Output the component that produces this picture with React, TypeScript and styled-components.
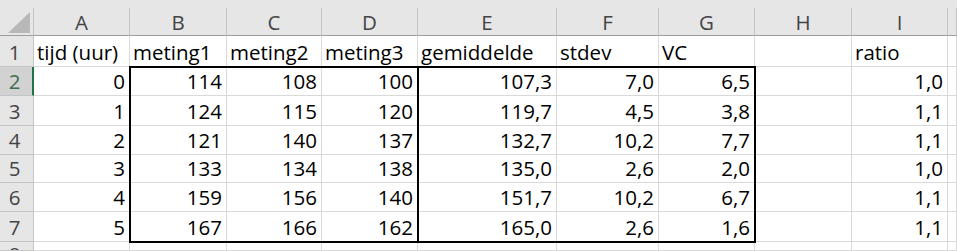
import React from 'react';
import styled, { createGlobalStyle } from 'styled-components';

const GlobalStyle = createGlobalStyle`
  html, body {
    margin: 0;
    padding: 0;
    background: #fff;
    overflow: hidden;
  }
  body {
    font-family: 'Open Sans', 'Liberation Sans', sans-serif;
    font-variant-ligatures: none;
  }
`;

const Sheet = styled.div`
  display: grid;
  grid-template-columns: 34px 96px 97px 95px 96px 139px 102px 96px 97px 96px 1fr;
  grid-template-rows: 8px 28px 31px 29px 30px 29px 28px 29px 30px 1fr;
  width: 957px;
  height: 251px;
  overflow: hidden;
  background: #fff;
  font-size: 20.5px;
  line-height: 20px;
  color: #000;
`;

const TopStrip = styled.div`
  grid-row: 1;
  grid-column: 1 / -1;
  background: #e6e6e6;
`;

const Corner = styled.div`
  grid-row: 2;
  grid-column: 1;
  background: #e6e6e6;
  border-right: 1px solid #c4c4c4;
  border-bottom: 1px solid #9d9d9d;
  box-sizing: border-box;

  svg {
    display: block;
  }
`;

const ColHead = styled.div<{ $col: number }>`
  grid-row: 2;
  grid-column: ${(p) => p.$col};
  background: #e6e6e6;
  border-right: 1px solid #c4c4c4;
  border-bottom: 1px solid #9d9d9d;
  box-sizing: border-box;
  display: flex;
  align-items: flex-end;
  justify-content: center;
  padding-bottom: 3px;
  color: #444;
`;

const RowHead = styled.div<{ $row: number; $active?: boolean; $partial?: boolean }>`
  grid-row: ${(p) => p.$row};
  grid-column: 1;
  background: ${(p) => (p.$active ? '#d2d2d2' : '#e6e6e6')};
  border-right: ${(p) => (p.$active ? '2px solid #217346' : '1px solid #c4c4c4')};
  border-bottom: 1px solid #c4c4c4;
  box-sizing: border-box;
  display: flex;
  align-items: ${(p) => (p.$partial ? 'flex-start' : 'flex-end')};
  justify-content: center;
  padding: ${(p) => (p.$partial ? '2px 4px 0 0' : '0 4px 4px 0')};
  padding-right: ${(p) => (p.$active ? '3px' : '4px')};
  overflow: hidden;
  color: ${(p) => (p.$active ? '#3f6b53' : '#444')};
`;

const Cell = styled.div<{ $row: number; $col: number; $num?: boolean }>`
  grid-row: ${(p) => p.$row};
  grid-column: ${(p) => p.$col};
  border-right: 1px solid #d9d9d9;
  border-bottom: 1px solid #d9d9d9;
  box-sizing: border-box;
  display: flex;
  align-items: flex-end;
  justify-content: ${(p) => (p.$num ? 'flex-end' : 'flex-start')};
  padding: 0 4px 4px 3px;
  white-space: nowrap;
  overflow: hidden;
`;

const RangeBox = styled.div<{ $cols: string }>`
  grid-row: 4 / 10;
  grid-column: ${(p) => p.$cols};
  border: 2px solid #000;
  margin: -1px;
  z-index: 2;
  pointer-events: none;
`;

const header = ['tijd (uur)', 'meting1', 'meting2', 'meting3', 'gemiddelde', 'stdev', 'VC', '', 'ratio'];

const data: string[][] = [
  ['0', '114', '108', '100', '107,3', '7,0', '6,5', '', '1,0'],
  ['1', '124', '115', '120', '119,7', '4,5', '3,8', '', '1,1'],
  ['2', '121', '140', '137', '132,7', '10,2', '7,7', '', '1,1'],
  ['3', '133', '134', '138', '135,0', '2,6', '2,0', '', '1,0'],
  ['4', '159', '156', '140', '151,7', '10,2', '6,7', '', '1,1'],
  ['5', '167', '166', '162', '165,0', '2,6', '1,6', '', '1,1'],
];

const letters = ['A', 'B', 'C', 'D', 'E', 'F', 'G', 'H', 'I', ''];

export default function App(): JSX.Element {
  return (
    <>
      <GlobalStyle />
      <Sheet>
        <TopStrip />
        <Corner>
          <svg width="33" height="27" viewBox="0 0 33 27">
            <polygon points="30,4 30,25 8,25" fill="#b8b8b8" />
          </svg>
        </Corner>
        {letters.map((l, i) => (
          <ColHead key={i} $col={i + 2}>
            {l}
          </ColHead>
        ))}

        {[1, 2, 3, 4, 5, 6, 7, 8].map((n) => (
          <RowHead key={n} $row={n + 2} $active={n === 2} $partial={n === 8}>
            {n}
          </RowHead>
        ))}

        {header.map((h, i) => (
          <Cell key={'h' + i} $row={3} $col={i + 2}>
            {h}
          </Cell>
        ))}
        <Cell $row={3} $col={11} />

        {data.map((row, r) =>
          [...row, ''].map((v, c) => (
            <Cell key={r + '-' + c} $row={r + 4} $col={c + 2} $num>
              {v}
            </Cell>
          ))
        )}

        {letters.map((_, i) => (
          <Cell key={'e' + i} $row={10} $col={i + 2} />
        ))}

        <RangeBox $cols="3 / 6" />
        <RangeBox $cols="6 / 9" />
      </Sheet>
    </>
  );
}
